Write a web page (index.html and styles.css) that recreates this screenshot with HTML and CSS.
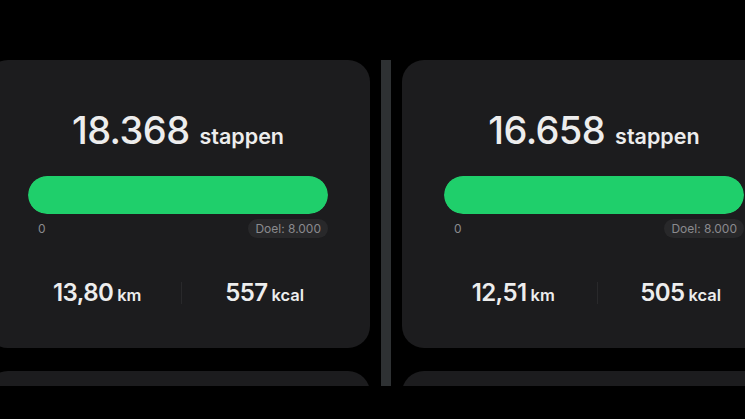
FILE: index.html
```html
<!DOCTYPE html>
<html lang="nl">
<head>
  <meta charset="UTF-8">
  <meta name="viewport" content="width=device-width, initial-scale=1">
  <title>Stappen</title>
  <link rel="stylesheet" href="styles.css">
</head>
<body>
  <div class="screen">
    <!-- linker telefoon -->
    <div class="phone phone-left">
      <div class="card">
        <div class="steps">
          <span class="steps-count">18.368</span>
          <span class="steps-unit">stappen</span>
        </div>
        <div class="bar"><div class="bar-fill" style="width: 100%;"></div></div>
        <div class="bar-labels">
          <span class="bar-min">0</span>
          <span class="goal">Doel: 8.000</span>
        </div>
        <div class="stats">
          <div class="stat"><span class="stat-value">13,80</span> <span class="stat-unit">km</span></div>
          <div class="stat-divider"></div>
          <div class="stat"><span class="stat-value">557</span> <span class="stat-unit">kcal</span></div>
        </div>
      </div>
      <div class="card card-next"></div>
    </div>

    <div class="divider"></div>

    <!-- rechter telefoon -->
    <div class="phone phone-right">
      <div class="card">
        <div class="steps">
          <span class="steps-count">16.658</span>
          <span class="steps-unit">stappen</span>
        </div>
        <div class="bar"><div class="bar-fill" style="width: 100%;"></div></div>
        <div class="bar-labels">
          <span class="bar-min">0</span>
          <span class="goal">Doel: 8.000</span>
        </div>
        <div class="stats">
          <div class="stat"><span class="stat-value">12,51</span> <span class="stat-unit">km</span></div>
          <div class="stat-divider"></div>
          <div class="stat"><span class="stat-value">505</span> <span class="stat-unit">kcal</span></div>
        </div>
      </div>
      <div class="card card-next"></div>
    </div>
  </div>
</body>
</html>
```

FILE: styles.css
```css
* {
  box-sizing: border-box;
  margin: 0;
  padding: 0;
}

body {
  background: #000000;
  font-family: Inter, 'Noto Sans', sans-serif;
  color: #ededed;
  width: 745px;
  height: 419px;
  overflow: hidden;
}

.screen {
  display: flex;
  height: 419px;
}

.phone {
  height: 386px;
  padding-top: 60px;
  overflow: hidden;
  display: flex;
  flex-direction: column;
  gap: 23px;
}

.phone-left {
  width: 381px;
  flex-shrink: 0;
}

.phone-left .card {
  margin-left: -14px;
}

.phone-right {
  flex: 1;
  min-width: 0;
  padding-left: 11px;
}

/* grijze balk tussen de twee screenshots */
.divider {
  width: 10px;
  flex-shrink: 0;
  height: 326px;
  margin-top: 60px;
  background: #2e3133;
}

.card {
  width: 384px;
  flex-shrink: 0;
  height: 288px;
  background: #1c1c1e;
  border-radius: 22px;
  padding: 49px 42px 0;
}

.card-next {
  height: 100px;
}

.steps {
  display: flex;
  justify-content: center;
  align-items: baseline;
  gap: 10px;
  line-height: 42px;
}

.steps-count {
  font-size: 38px;
  font-weight: 500;
  letter-spacing: -0.6px;
}

.steps-unit {
  font-size: 21.5px;
  font-weight: 600;
}

.bar {
  margin-top: 19px;
  height: 38px;
  border-radius: 19px;
  background: #2c2c2e;
  overflow: hidden;
}

.bar-fill {
  height: 100%;
  border-radius: 19px;
  background: #1fcf6b;
}

.bar-labels {
  display: flex;
  justify-content: space-between;
  align-items: center;
  margin-top: 5px;
  font-size: 12px;
  color: #8a8a8e;
}

.bar-min {
  padding-left: 10px;
}

.goal {
  background: #28282a;
  border-radius: 10px;
  padding: 2px 7px;
}

.stats {
  display: grid;
  grid-template-columns: 1fr 1px 1fr;
  align-items: center;
  margin: 40px -20px 0 -14px;
}

.stat {
  text-align: center;
  font-weight: 600;
}

.stat-value {
  font-size: 24px;
  letter-spacing: -0.6px;
}

.stat-unit {
  font-size: 16.5px;
}

.stat-divider {
  height: 22px;
  background: #29292b;
}
```
